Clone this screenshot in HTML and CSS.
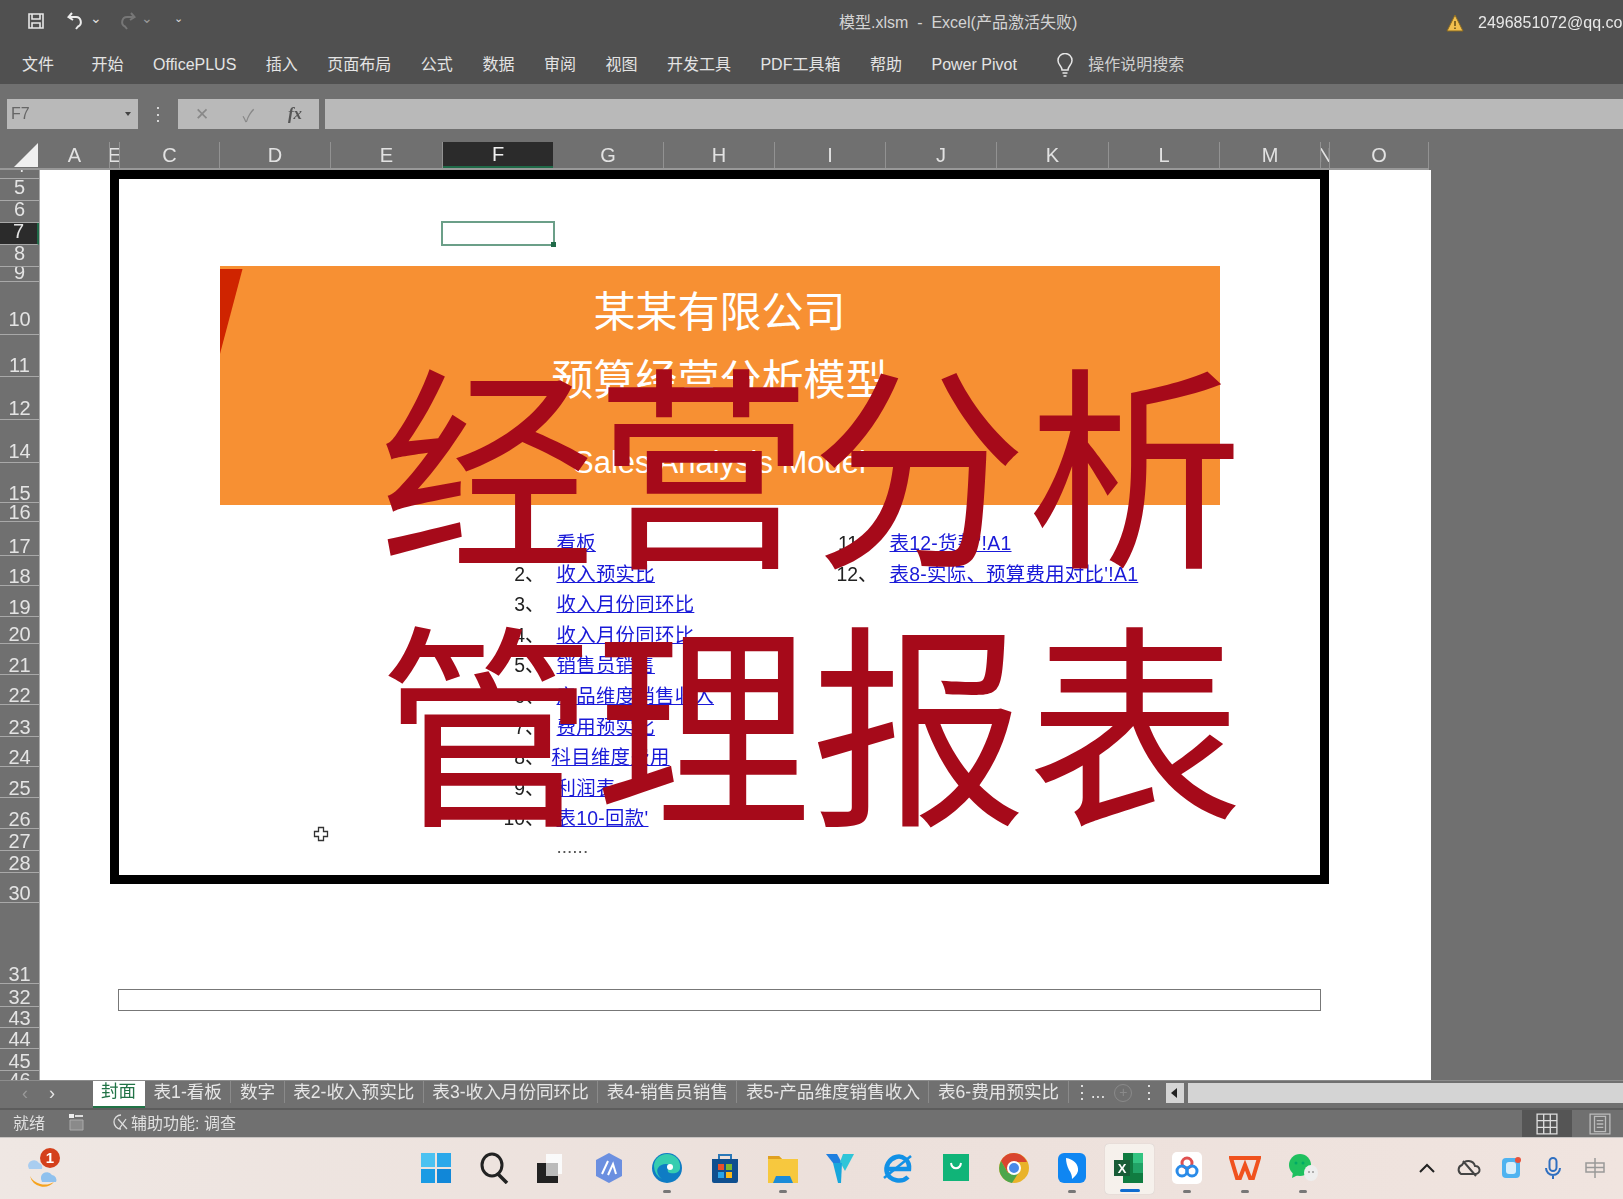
FILE: index.html
```html
<!DOCTYPE html>
<html lang="zh-CN">
<head>
<meta charset="utf-8">
<title>模型.xlsm - Excel</title>
<link rel="stylesheet" href="styles.css">
</head>
<body>
<div class="app">
  <header class="chrome soft">
    <div class="qat">
      <div class="qat-tools">
        <svg class="ic18" viewBox="0 0 18 18" fill="none" stroke="#e6e6e6" stroke-width="1.6"><path d="M2 2h14v14H2z"/><path d="M5 2v5h8V2M5 16v-5h8v5"/></svg>
        <svg class="ic20 gap-undo" viewBox="0 0 20 20" fill="none" stroke="#ececec" stroke-width="2"><path d="M6 2 2.5 6 7 9"/><path d="M3 6h7a5 5 0 0 1 2 9.500L10 18"/></svg>
        <span class="chev">⌄</span>
        <svg class="ic20" viewBox="0 0 20 20" fill="none" stroke="#777" stroke-width="2"><path d="M14 2l3.500 4L13 9"/><path d="M17 6h-7a5 5 0 0 0-2 9.500l2 2.500"/></svg>
        <span class="chev dim">⌄</span>
        <span class="chev small">⌄</span>
      </div>
      <div class="doc-title">模型.xlsm&nbsp; - &nbsp;Excel(产品激活失败)</div>
      <div class="account">
        <svg class="ic18" viewBox="0 0 18 18"><path d="M9 1 17 17H1z" fill="#f2bf4e" stroke="#8a6a20"/><path d="M9 7v5M9 13.500v1.500" stroke="#5a4410" stroke-width="1.400"/></svg>
        <span>2496851072@qq.com</span>
      </div>
    </div>
    <nav class="ribbon">
      <span class="file">文件</span><span>开始</span><span>OfficePLUS</span><span>插入</span><span>页面布局</span><span>公式</span><span>数据</span><span>审阅</span><span>视图</span><span>开发工具</span><span>PDF工具箱</span><span>帮助</span><span>Power Pivot</span>
      <span class="search">
        <svg class="bulb" viewBox="0 0 18 24" fill="none" stroke="#e6e6e6" stroke-width="1.500"><path d="M6 17c0-4-4-5-4-9.500a7 7 0 0 1 14 0C16 12 12 13 12 17z"/><path d="M6.500 20h5M7.500 23h3"/></svg>
        操作说明搜索
      </span>
    </nav>
  </header>

  <section class="formula-bar soft">
    <div class="name-box"><span>F7</span><i class="mini-arrow"></i></div>
    <div class="vdots">⋮</div>
    <div class="fx-box"><span>✕</span><span>✓</span><span class="fx">fx</span></div>
    <div class="formula-input"></div>
  </section>

  <section class="col-heads soft">
    <div class="corner"><i class="corner-tri"></i></div>
    <div class="cols">
      <span>A</span><span>E</span><span>C</span><span>D</span><span>E</span><span class="active">F</span><span>G</span><span>H</span><span>I</span><span>J</span><span>K</span><span>L</span><span>M</span><span>N</span><span>O</span>
    </div>
  </section>

  <main class="work">
    <div class="rows soft">
      <span class="clip"><i>4</i></span><span class="mid">5</span><span class="mid">6</span><span class="active mid">7</span><span class="mid">8</span><span>9</span><span class="lift6">10</span><span class="lift2">11</span><span class="lift2">12</span><span class="lift2">14</span><span>15</span><span>16</span><span>17</span><span>18</span><span>19</span><span>20</span><span>21</span><span>22</span><span>23</span><span>24</span><span>25</span><span>26</span><span>27</span><span>28</span><span>30</span><span>31</span><span>32</span><span>43</span><span>44</span><span>45</span><span class="cut">46</span>
    </div>
    <div class="sheet">
      <div class="frame">
        <div class="selected"><i class="handle"></i></div>
        <div class="banner">
          <i class="wedge"></i>
          <div class="ban-line">某某有限公司</div>
          <div class="ban-line">预算经营分析模型</div>
          <div class="ban-en">Sales Analysis Model</div>
        </div>
        <div class="toc">
          <ol class="toc-col">
            <li><b>1、</b><a>看板</a></li>
            <li><b>2、</b><a>收入预实比</a></li>
            <li><b>3、</b><a>收入月份同环比</a></li>
            <li><b>4、</b><a>收入月份同环比</a></li>
            <li><b>5、</b><a>销售员销售</a></li>
            <li><b>6、</b><a>产品维度销售收入</a></li>
            <li><b>7、</b><a>费用预实比</a></li>
            <li><b>8、</b><a class="shift">科目维度费用</a></li>
            <li><b>9、</b><a>利润表</a></li>
            <li><b>10、</b><a>表10-回款'</a></li>
            <li><b></b><em>......</em></li>
          </ol>
          <ol class="toc-col">
            <li><b>11、</b><a>表12-货款'!A1</a></li>
            <li><b>12、</b><a>表8-实际、预算费用对比'!A1</a></li>
          </ol>
        </div>
      </div>
      <div class="foot-box"></div>
      <svg class="cursor" viewBox="0 0 16 16" fill="#fff" stroke="#333" stroke-width="1.300"><path d="M5.500 1.500h5v4h4v5h-4v4h-5v-4h-4v-5h4z"/></svg>
      <div class="big-text">
        <div class="big-line">经营分析</div>
        <div class="big-line">管理报表</div>
      </div>
    </div>
    <div class="void"></div>
  </main>

  <section class="tabs soft">
    <div class="tab-nav"><span class="dim">‹</span><span>›</span></div>
    <div class="tab active">封面</div>
    <div class="tab">表1-看板</div>
    <div class="tab">数字</div>
    <div class="tab">表2-收入预实比</div>
    <div class="tab">表3-收入月份同环比</div>
    <div class="tab">表4-销售员销售</div>
    <div class="tab">表5-产品维度销售收入</div>
    <div class="tab">表6-费用预实比</div>
    <div class="tab more">⋮...</div>
    <div class="tab-add">+</div>
    <div class="tab-dots">⋮</div>
    <div class="hscroll"><i class="hbtn"></i><div class="htrack"></div></div>
  </section>

  <footer class="status soft">
    <span>就绪</span>
    <svg class="ic18 st-calc" viewBox="0 0 18 18"><path d="M2 1h5v4H2z" fill="#eee"/><path d="M8 2h8v2H8z" fill="#ddd"/><path d="M3 7h13v10H3z" fill="#8a8a8a" stroke="#aaa"/></svg>
    <svg class="ic18 st-acc" viewBox="0 0 18 18" fill="none" stroke="#ddd" stroke-width="1.300"><path d="M10 2a7 7 0 1 0 0 14"/><path d="M7 6l9 10M15 6l-7 10"/></svg>
    <span class="st-acc-t">辅助功能: 调查</span>
    <div class="views">
      <div class="view on"><svg class="ic22" viewBox="0 0 20 20" fill="none" stroke="#ddd" stroke-width="1.200"><path d="M1 1h18v18H1zM7 1v18M13 1v18M1 7h18M1 13h18"/></svg></div>
      <div class="view"><svg class="ic22" viewBox="0 0 20 20" fill="none" stroke="#bbb" stroke-width="1.200"><path d="M1 1h18v18H1zM5 3h10v14H5zM7 7h6M7 10h6M7 13h6"/></svg></div>
    </div>
  </footer>

  <div class="taskbar soft">
    <div class="tb-left">
      <svg class="weather" viewBox="0 0 40 44">
        <path d="M6 30a16 14 0 0 0 24 6 14 14 0 0 1-24-6z" fill="#f5a31e"/>
        <path d="M4 20a6 6 0 0 1 11-3 5 5 0 0 1 3 6H5z" fill="#a9cdf0"/>
        <path d="M17 33a6 6 0 0 1 11-4 5 5 0 0 1 4 7H18z" fill="#8fc1ee"/>
        <circle cx="26" cy="12" r="10" fill="#d4401c"/>
        <text x="26" y="17" class="badge-t">1</text>
      </svg>
    </div>
    <div class="tb-center">
      <div class="tb-i"><svg class="ic32" viewBox="0 0 32 32"><path d="M1 1h14v14H1z" fill="#4cc2f1"/><path d="M17 1h14v14H17z" fill="#2ba8ea"/><path d="M1 17h14v14H1z" fill="#1a9be4"/><path d="M17 17h14v14H17z" fill="#1187d8"/></svg></div>
      <div class="tb-i"><svg class="ic32" viewBox="0 0 32 32" fill="none" stroke="#222" stroke-width="3"><ellipse cx="14" cy="13" rx="10" ry="11"/><path d="M20 22l9 9" stroke-width="3.500"/></svg></div>
      <div class="tb-i"><svg class="ic32" viewBox="0 0 32 32"><path d="M11 2h16v20H11z" fill="#fafafa"/><path d="M2 11h21v20H2z" fill="#222"/><path d="M11 11h12v13H11z" fill="#bbb"/></svg></div>
      <div class="tb-i"><svg class="ic32" viewBox="0 0 32 32"><path d="M16 1l13 7v16l-13 7-13-7V8z" fill="#6b8fe0"/><path d="M9 22 15 9M15 23l5-11 3 10" fill="none" stroke="#fff" stroke-width="2"/></svg></div>
      <div class="tb-i"><svg class="ic32" viewBox="0 0 32 32"><circle cx="16" cy="16" r="15" fill="#0f7cc4"/><path d="M3 14a13 12 0 0 1 26 0c1 7-6 8-10 7-4-1-2-6 1-6 0-3-9-5-13 1-2 3 0 8 4 11A15 15 0 0 1 3 14z" fill="#36cdb0"/><circle cx="19" cy="15" r="3" fill="#fff"/></svg><i class="dot"></i></div>
      <div class="tb-i"><svg class="ic32" viewBox="0 0 32 32"><path d="M3 7h26v22a2 2 0 0 1-2 2H5a2 2 0 0 1-2-2z" fill="#0f4f8f"/><path d="M10 7V3h12v4" fill="none" stroke="#2a78b8" stroke-width="2"/><path d="M9 12h6v6H9z" fill="#e8512a"/><path d="M17 12h6v6h-6z" fill="#7cb82f"/><path d="M9 20h6v6H9z" fill="#27a4e8"/><path d="M17 20h6v6h-6z" fill="#fbb917"/></svg></div>
      <div class="tb-i"><svg class="ic32" viewBox="0 0 32 32"><path d="M1 4h11l3 3h16v24H1z" fill="#f7c83e"/><path d="M1 4h11l3 3H1z" fill="#e0a020"/><path d="M9 24h14l3 7H6z" fill="#1b8bd8"/></svg><i class="dot"></i></div>
      <div class="tb-i"><svg class="ic32" viewBox="0 0 32 32"><path d="M2 2h11l5 9h-9z" fill="#1f7fe0"/><path d="M30 2 21 19l-5-9 3-8z" fill="#2fc5d8"/><path d="M9 11h9l-1 20h-3z" fill="#16a6dc"/></svg></div>
      <div class="tb-i"><svg class="ic32" viewBox="0 0 32 32" fill="none" stroke="#1291e6" stroke-width="4.500"><path d="M5 17h22c1-9-7-14-13-12-7 2-11 9-9 16 3 8 15 10 21 4"/><path d="M2 26 29 4" stroke-width="2.500"/></svg></div>
      <div class="tb-i"><svg class="ic32" viewBox="0 0 32 32"><path d="M3 2h26v27H3z" fill="#10b478"/><path d="M11 11c1 7 9 7 10 0" fill="none" stroke="#fff" stroke-width="2"/></svg></div>
      <div class="tb-i"><svg class="ic32" viewBox="0 0 32 32"><circle cx="16" cy="16" r="15" fill="#e9b32a"/><path d="M16 1a15 15 0 0 0-13 8l7 12 6-11h13A15 15 0 0 0 16 1z" fill="#d9452f"/><path d="M3 9a15 15 0 0 0 11 22l7-11-11 1z" fill="#4ca64c"/><circle cx="16" cy="16" r="6" fill="#4a8ae8" stroke="#fff" stroke-width="2"/></svg></div>
      <div class="tb-i"><svg class="ic32" viewBox="0 0 32 32"><rect x="2" y="1" width="28" height="30" rx="6" fill="#0f86f2"/><path d="M10 6c7 1 13 6 12 13-1 4-4 6-6 8 0-4-1-6-3-9-2-4-3-8-3-12z" fill="#fff"/></svg><i class="dot"></i></div>
      <div class="tb-i tile"><svg class="ic32" viewBox="0 0 32 32"><path d="M10 1h20v30H10z" fill="#107c41"/><path d="M20 1h10v10H20z" fill="#33c481"/><path d="M20 11h10v10H20z" fill="#21a366"/><path d="M1 8h16v16H1z" fill="#185c37"/><text x="9" y="21" class="x-t">X</text></svg><i class="bar"></i></div>
      <div class="tb-i"><svg class="ic32" viewBox="0 0 32 32" fill="none" stroke-width="3"><rect x="1" y="0" width="30" height="32" rx="5" fill="#fff" stroke="none"/><circle cx="16" cy="11" r="5" stroke="#e05050"/><circle cx="11" cy="19" r="5" stroke="#2a8be8"/><circle cx="21" cy="19" r="5" stroke="#2a8be8"/></svg><i class="dot"></i></div>
      <div class="tb-i"><svg class="ic32" viewBox="0 0 32 32" fill="none" stroke="#f0521e" stroke-width="4"><path d="M2 6h28l-6 20h-3l-5-13-5 13H8z"/></svg><i class="dot"></i></div>
      <div class="tb-i"><svg class="ic32" viewBox="0 0 32 32"><ellipse cx="13" cy="13" rx="11" ry="11" fill="#1fc05f"/><path d="M6 20l-1 6 6-3z" fill="#1fc05f"/><circle cx="9" cy="11" r="1.500" fill="#0a6"/><circle cx="16" cy="11" r="1.500" fill="#0a6"/><ellipse cx="24" cy="21" rx="7" ry="8" fill="#eee"/><circle cx="22" cy="20" r="1" fill="#999"/><circle cx="26" cy="20" r="1" fill="#999"/></svg><i class="dot"></i></div>
    </div>
    <div class="tb-tray">
      <svg class="ic24" viewBox="0 0 24 24" fill="none" stroke="#222" stroke-width="2"><path d="M5 16l7-7 7 7"/></svg>
      <svg class="ic24" viewBox="0 0 24 24" fill="none" stroke="#444" stroke-width="2"><path d="M4 18a5 5 0 0 1 1-9 7 7 0 0 1 13 1 4 4 0 0 1 1 8zM6 5l13 15"/></svg>
      <svg class="ic24" viewBox="0 0 24 24"><rect x="3" y="2" width="18" height="20" rx="4" fill="#4fb3f0"/><rect x="7" y="6" width="10" height="12" rx="3" fill="#d8eefb"/><circle cx="19" cy="4" r="3" fill="#e8513a"/></svg>
      <svg class="ic24" viewBox="0 0 24 24" fill="none" stroke="#2f6fc0" stroke-width="2"><rect x="8.500" y="2" width="7" height="13" rx="3.500"/><path d="M5 12a7 7 0 0 0 14 0M12 19v4"/></svg>
      <svg class="ic24" viewBox="0 0 24 24" fill="none" stroke="#999" stroke-width="1.500"><path d="M3 7h18v9H3zM12 2v20M3 11.500h18"/></svg>
    </div>
  </div>
</div>
</body>
</html>
```
FILE: styles.css
```css
* { box-sizing: border-box; }
html, body { margin: 0; padding: 0; }
body { background: #707070; font-family: "Liberation Sans", "Noto Sans CJK SC", sans-serif; }
.app { width: 1623px; height: 1199px; display: flex; flex-direction: column; overflow: hidden; color: #e8e8e8; }
.soft { filter: blur(0.5px); }

.ic18 { width: 18px; height: 18px; flex: none; }
.ic20 { width: 20px; height: 20px; flex: none; }
.ic22 { width: 22px; height: 22px; flex: none; }
.ic24 { width: 24px; height: 24px; flex: none; }
.ic32 { width: 32px; height: 32px; flex: none; }

.chrome { height: 84px; background: #505050; flex: none; }
.qat { height: 42px; display: flex; align-items: center; position: relative; font-size: 16px; padding-left: 27px; }
.qat-tools { display: flex; align-items: center; gap: 4px; }
.gap-undo { margin-left: 17px; }
.chev { font-size: 14px; line-height: 12px; margin-top: -6px; width: 14px; color: #ddd; margin-right: 9px; }
.chev.dim { color: #999; }
.chev.small { font-size: 11px; margin-left: 6px; }
.doc-title { position: absolute; left: 839px; top: 13px; color: #d4d4d4; white-space: nowrap; font-size: 16px; line-height: 20px; }
.account { position: absolute; left: 1446px; top: 13px; display: flex; align-items: center; gap: 14px; white-space: nowrap; line-height: 20px; }

.ribbon { height: 42px; display: flex; align-items: baseline; padding: 13px 0 0 22px; gap: 29.500px; font-size: 16px; line-height: 20px; white-space: nowrap; color: #e4e4e4; }
.ribbon .file { margin-right: 8px; }
.search { display: flex; align-items: center; margin-left: 10px; gap: 14px; color: #cfcfcf; align-self: center; margin-top: -9px; }
.bulb { width: 18px; height: 24px; }

.formula-bar { height: 58px; flex: none; background: #707070; display: flex; padding: 15px 0 13px 7px; }
.name-box { width: 131px; height: 30px; background: #b9b9b9; color: #666; font-size: 16px; padding: 0 7px 0 4px; display: flex; align-items: center; justify-content: space-between; }
.mini-arrow { border: 3px solid transparent; border-top: 4px solid #444; border-bottom: 0; }
.vdots { width: 40px; text-align: center; font-size: 18px; line-height: 30px; color: #ddd; }
.fx-box { width: 141px; height: 30px; background: #b9b9b9; color: #888; display: flex; align-items: center; justify-content: space-around; font-size: 17px; }
.fx { font-family: "Liberation Serif", serif; font-style: italic; font-weight: bold; color: #555; }
.formula-input { flex: 1; height: 30px; margin-left: 6px; background: #b9b9b9; }

.col-heads { height: 28px; flex: none; background: #707070; display: flex; }
.corner { width: 40px; position: relative; border-bottom: 2px solid #989898; }
.corner-tri { position: absolute; right: 2px; bottom: 1px; border-style: solid; border-width: 0 0 24px 24px; border-color: transparent transparent #efefef transparent; }
.cols { display: grid; border-bottom: 2px solid #989898; grid-template-columns: 70px 10px 100px 111px 112px 110px 111px 111px 111px 111px 112px 111px 101px 9px 99px; font-size: 20px; color: #e2e2e2; }
.cols span { display: flex; align-items: center; justify-content: center; border-right: 1px solid #929292; overflow: hidden; }
.cols .active { background: #2b2b2b; border-right: 0; border-bottom: 2px solid #1f6a48; color: #f0f0f0; }

.work { flex: 1; display: flex; min-height: 0; }
.rows { width: 40px; flex: none; background: #707070; border-right: 1px solid #aaa; display: grid; height: 910px; overflow: hidden; font-size: 20px; color: #e4e4e4;
  grid-template-rows: 9px 22px 22px 22px 22px 15px 53px 42px 43px 43px 40px 19px 34px 30px 31px 27px 31px 30px 32px 30px 31px 31px 22px 22px 30px 81px 23px 21px 21px 22px 9px; }
.rows span { display: flex; justify-content: center; align-items: flex-end; line-height: 18px; overflow: hidden; border-bottom: 1px solid #a8a8a8; }
.rows .active { background: #2b2b2b; border-right: 2px solid #1f6a48; }
.rows .cut { align-items: flex-start; border-bottom: 0; }
.rows .mid { align-items: center; padding-bottom: 5px; }
.rows .lift6 { padding-bottom: 6px; }
.rows .lift2 { padding-bottom: 2px; }
.rows .clip { align-items: flex-start; }
.rows .clip i { font-style: normal; margin-top: -14px; }

.sheet { width: 1391px; flex: none; background: #fff; position: relative; padding: 0 0 0 70px; }
.frame { width: 1219px; height: 714px; border: 9.500px solid #000; position: relative; background: #fff; padding: 87px 0 0 100.500px; }
.selected { position: absolute; left: 322px; top: 42px; width: 114px; height: 25px; border: 2px solid #6b9f88; }
.handle { position: absolute; right: -3px; bottom: -3px; width: 5px; height: 5px; background: #1f6a48; }
.banner { width: 1000px; height: 239px; background: #f79033; position: relative; color: #fff; text-align: center; padding-top: 13px; }
.wedge { position: absolute; left: 0; top: 3px; width: 23px; height: 85px; background: #cf2400; clip-path: polygon(0 0, 100% 0, 2% 100%, 0 100%); }
.ban-line { font-size: 42px; line-height: 68px; font-weight: 400; color: #fff; }
.ban-en { font-size: 31px; line-height: 50px; margin-top: 23px; }

.toc { display: flex; margin: 23px 0 0 270px; font-size: 19.400px; color: #222; filter: blur(0.4px); }
.toc-col { list-style: none; margin: 0; padding: 0; width: 333px; flex: none; }
.toc-col li { display: flex; height: 30.600px; line-height: 30px; white-space: nowrap; }
.toc-col b { width: 55px; text-align: right; font-weight: 400; margin-right: 12px; flex: none; }
.toc-col a { color: #1a1ad8; text-decoration: underline; letter-spacing: 0.3px; }
.toc-col a.shift { margin-left: -5px; }
.toc-col em { font-style: normal; font-size: 19px; line-height: 26px; color: #555; }

.foot-box { width: 1203px; height: 22px; border: 1px solid #777; margin: 105px 0 0 8px; }
.cursor { position: absolute; left: 273px; top: 656px; width: 16px; height: 16px; }
.big-text { position: absolute; left: 0; top: 177px; width: 1542px; color: #a60a1a; font-size: 216px; text-align: center; font-weight: 400; white-space: nowrap; }
.big-line { height: 258px; line-height: 258px; overflow: hidden; clip-path: inset(0 0 35px 0); }

.void { flex: 1; background: #707070; }

.tabs { height: 28px; flex: none; background: #707070; display: flex; align-items: flex-start; border-top: 1px solid #8c8c8c; font-size: 17.600px; color: #e6e6e6; white-space: nowrap; }
.tab-nav { width: 93px; height: 24px; display: flex; gap: 21px; padding-left: 22px; align-items: center; font-size: 18px; }
.tab-nav .dim { color: #999; }
.tab { padding: 0 8.500px; display: flex; align-items: center; border-right: 1px solid #8a8a8a; height: 22px; line-height: 20px; }
.tab.active { background: #fff; color: #217346; width: 52px; height: 27px; padding: 0 8px 5px; border-bottom: 2px solid #217346; border-right: 0; }
.tab.more { border-right: 0; padding: 0 7px 0 4px; }
.tab-add { width: 18px; height: 18px; border: 1px solid #8a8a8a; border-radius: 50%; color: #8a8a8a; font-size: 14px; line-height: 15px; text-align: center; margin: 3px 8px 0 2px; }
.tab-dots { width: 16px; text-align: center; line-height: 22px; }
.hscroll { flex: 1; display: flex; gap: 4px; margin: 2px 0 0 10px; height: 20px; }
.hbtn { width: 18px; background: #d4d4d4; position: relative; }
.hbtn::after { content: ""; position: absolute; left: 5px; top: 5px; border: 5px solid transparent; border-right: 6px solid #222; border-left: 0; }
.htrack { flex: 1; background: #d4d4d4; }

.status { height: 29px; flex: none; background: #707070; border-top: 2px solid #5c5c5c; display: flex; align-items: center; padding-left: 13px; font-size: 16px; color: #e0e0e0; }
.status > span, .st-calc, .st-acc { margin-bottom: 3px; }
.st-calc { margin-left: 22px; }
.st-acc { margin-left: 26px; }
.st-acc-t { margin-left: 2px; }
.views { margin-left: auto; display: flex; height: 100%; gap: 5px; }
.view { width: 46px; display: flex; align-items: center; justify-content: center; }
.view.on { background: #555; width: 50px; }

.taskbar { height: 62px; flex: none; background: linear-gradient(90deg, #efe7e3, #ece0db 50%, #f0e4df); display: flex; border-top: 1px solid #c8c4c2; }
.tb-left { width: 407px; padding: 8px 0 0 24px; }
.weather { width: 40px; height: 44px; }
.badge-t { fill: #fff; font-size: 15px; font-weight: bold; text-anchor: middle; }
.tb-center { width: 925px; display: flex; }
.tb-i { width: 57.800px; position: relative; display: flex; justify-content: center; padding-top: 14px; }
.tb-i.tile::before { content: ""; position: absolute; left: 4px; right: 4px; top: 6px; height: 50px; background: #f6f1ec; border-radius: 4px; box-shadow: 0 0 1px #bbb; }
.tb-i svg { position: relative; }
.dot { position: absolute; left: 25px; top: 52px; width: 8px; height: 3px; border-radius: 2px; background: #777; }
.bar { position: absolute; left: 19px; top: 51px; width: 20px; height: 3px; border-radius: 2px; background: #0f6cd0; }
.x-t { fill: #fff; font-size: 13px; font-weight: bold; text-anchor: middle; }
.tb-tray { flex: 1; display: flex; gap: 18px; padding: 18px 0 0 83px; }
```
